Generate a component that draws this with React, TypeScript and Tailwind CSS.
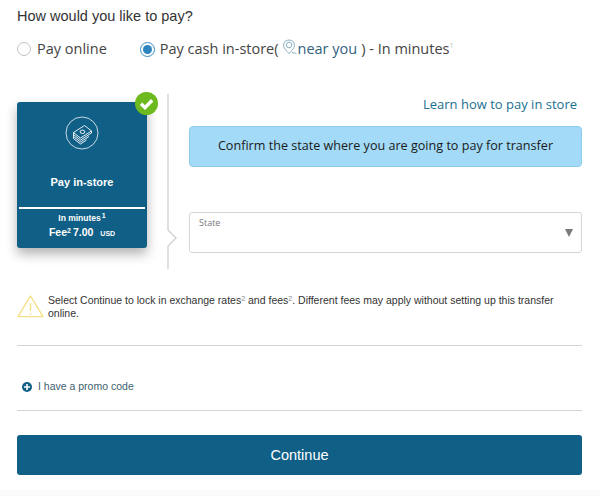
import React from "react";

const sans = "font-['Liberation_Sans',Arial,sans-serif]";
const open = "font-['Open_Sans',sans-serif]";

function MoneyIcon() {
  return (
    <svg width="34" height="34" viewBox="0 0 34 34" fill="none" stroke="#fff" strokeWidth="0.9" strokeLinejoin="round">
      <circle cx="17" cy="17" r="16" strokeOpacity="0.85" />
      <path d="M8.5 16.5 L19.5 9.5 L26.5 15 L15.5 22 Z" />
      <ellipse cx="17.5" cy="15.8" rx="2.4" ry="1.7" />
      <path d="M8.5 16.5 V18.5 L15.5 24 L26.5 17 V15" />
      <path d="M8.5 18.5 V20.5 L15.5 26 L24 20.5" />
      <path d="M8.5 20.5 V22.5 L15.5 28 L21.5 24" />
    </svg>
  );
}

function Check() {
  return (
    <svg width="23" height="23" viewBox="0 0 23 23" className="absolute -right-[11px] -top-[10px]">
      <circle cx="11.5" cy="11.5" r="11.5" fill="#6cba1f" />
      <path d="M6 11.8 L10 15.6 L17.2 8.2" fill="none" stroke="#fff" strokeWidth="3.4" />
    </svg>
  );
}

function Divider() {
  return (
    <svg width="12" height="175" viewBox="0 0 12 175" fill="none" stroke="#cfcfcf" strokeWidth="1.3" className="shrink-0">
      <path d="M1 0 V136 L9 144 L1 152 V175" />
    </svg>
  );
}

function Warning() {
  return (
    <svg width="27" height="25" viewBox="0 0 27 25" fill="none" stroke="#f5df86" strokeWidth="1.4" strokeLinejoin="round" className="shrink-0">
      <path d="M13.5 2 L26 22.6 H1 Z" />
      <path d="M13.5 9 V17 M13.5 19 V20.5" />
    </svg>
  );
}

export default function App() {
  return (
    <div className="flex h-[496px] w-[600px] flex-col overflow-hidden bg-white">
      <div className="flex h-[490px] flex-col bg-white pl-[17px] pr-[18px] pt-[6px]">
        <h1 className={`${sans} text-[14.5px] leading-[20px] text-[#333]`}>How would you like to pay?</h1>

        <div className={`${open} mt-[13px] flex h-[20px] items-center text-[14.5px] text-[#444]`}>
          <span className="h-[14px] w-[14px] rounded-full border border-[#c4c4c4] bg-white" />
          <span className="ml-[6px]">Pay online</span>
          <span className="ml-[33px] flex h-[15px] w-[15px] items-center justify-center rounded-full border border-[#3a8fc4]">
            <span className="h-[9px] w-[9px] rounded-full bg-[#2f85bd]" />
          </span>
          <span className="ml-[5px]">Pay cash in-store(</span>
          <svg width="16" height="17" viewBox="0 0 16 17" fill="none" stroke="#7fa9bf" strokeWidth="0.9" className="ml-[3px] mb-[3px]">
            <path d="M7 1 C3.5 1 1.5 3.5 1.5 6.3 C1.5 9.5 5 12 7 14.5 C9 12 12.5 9.5 12.5 6.3 C12.5 3.5 10.5 1 7 1 Z" />
            <circle cx="7" cy="6" r="2.8" />
            <path d="M10 13.5 L14.5 14.5" />
          </svg>
          <span className="text-[#33617d]">near you</span>
          <span className="ml-[4px]">) - In minutes</span>
          <sup className="text-[7px] text-[#bbb]">1</sup>
        </div>

        <div className="mt-[35px] flex h-[175px] items-start">
          <div className="relative mt-[8px] flex h-[146px] w-[130px] shrink-0 flex-col items-center rounded-[3px] bg-[#105f87] pt-[14px] text-white shadow-[0_6px_12px_rgba(0,0,0,0.3)]">
            <Check />
            <MoneyIcon />
            <div className={`${sans} mt-[24px] text-[11px] font-bold leading-[16px]`}>Pay in-store</div>
            <div className="mx-[2px] mt-[17px] h-[2px] w-[126px] bg-white" />
            <div className={`${sans} mt-[3px] text-[8.5px] font-bold leading-[12px]`}>
              In minutes<sup className="ml-[1px] text-[7px]">1</sup>
            </div>
            <div className={`${sans} flex items-baseline text-[10.5px] font-bold leading-[16px]`}>
              Fee<sup className="text-[7px]">2</sup>
              <span className="ml-[2px]">7.00</span>
              <span className="ml-[7px] text-[7px]">USD</span>
            </div>
          </div>

          <div className="ml-[20px]">
            <Divider />
          </div>

          <div className="ml-[10px] flex min-w-0 flex-1 flex-col">
            <div className={`${open} h-[20px] pr-[5px] text-right text-[13px] leading-[20px] text-[#21708f]`}>
              Learn how to pay in store
            </div>
            <div className={`${open} mt-[12px] flex h-[41px] items-center justify-center rounded-[4px] border border-[#8ccdee] bg-[#a3daf7] text-[12.6px] text-[#1a1a1a]`}>
              Confirm the state where you are going to pay for transfer
            </div>
            <div className="mt-[45px] flex h-[41px] items-start justify-between rounded-[3px] border border-[#d6d6d6] bg-white pl-[9px] pr-[8px]">
              <span className={`${open} mt-[4px] text-[9px] leading-[12px] text-[#777]`}>State</span>
              <span className="mt-[16px] h-0 w-0 border-x-[4.5px] border-t-[8px] border-x-transparent border-t-[#7a7a7a]" />
            </div>
          </div>
        </div>

        <div className="mt-[25px] flex h-[26px] items-start">
          <Warning />
          <p className={`${sans} ml-[4px] text-[10.5px] leading-[13px] text-[#333]`}>
            Select Continue to lock in exchange rates<sup className="text-[7px] text-[#888]">2</sup> and fees
            <sup className="text-[7px] text-[#888]">2</sup>. Different fees may apply without setting up this transfer
            online.
          </p>
        </div>

        <div className="mt-[25px] h-[1px] bg-[#d4d4d4]" />

        <div className="mt-[33px] flex h-[16px] items-center pl-[5px]">
          <span className="flex h-[10px] w-[10px] items-center justify-center rounded-full bg-[#105f87]">
            <svg width="6" height="6" viewBox="0 0 6 6" stroke="#fff" strokeWidth="1.6">
              <path d="M3 0 V6 M0 3 H6" />
            </svg>
          </span>
          <span className={`${sans} ml-[6px] text-[10.5px] text-[#41616f]`}>I have a promo code</span>
        </div>

        <div className="mt-[15px] h-[1px] bg-[#d4d4d4]" />

        <button className={`${sans} mt-[24px] h-[40px] w-full rounded-[3px] bg-[#105f87] pt-[1px] text-[14.5px] font-medium text-white`}>
          Continue
        </button>
      </div>
      <div className="h-[6px] bg-[#fafafa]" />
    </div>
  );
}
